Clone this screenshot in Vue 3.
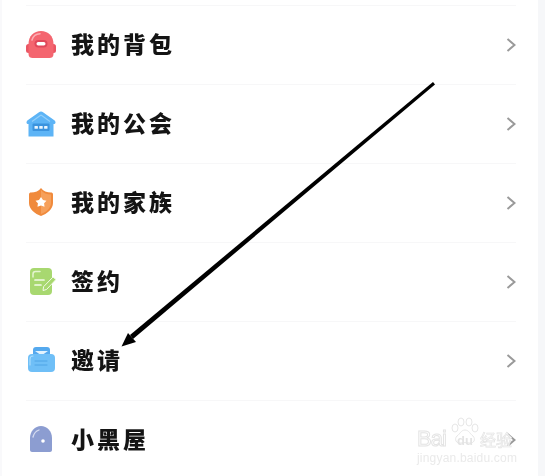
<template>
  <div class="page">
    <div class="list">
      <div v-for="item in items" :key="item.name" class="row">
        <svg class="icon" viewBox="0 0 30 30">
          <template v-if="item.icon === 'bag'">
            <rect x="0" y="14" width="5" height="9" rx="2.500" fill="#ea5563" />
            <rect x="25" y="14" width="5" height="9" rx="2.500" fill="#ea5563" />
            <path d="M2.500 14C2.500 6 8 1 15 1s12.500 5 12.500 13v10c0 3-2 4-4 4H6.500c-2 0-4-1-4-4z" fill="#f4656f" />
            <path d="M6 10C7 6.500 10 4 14 3.800" stroke="#fbaeb3" stroke-width="1.600" fill="none" stroke-linecap="round" />
            <rect x="8.500" y="10" width="13" height="7.500" rx="3.700" fill="#e0475a" />
            <rect x="10.500" y="12" width="9" height="3.500" rx="1.700" fill="#fff" />
          </template>
          <template v-else-if="item.icon === 'guild'">
            <path d="M15 2.500c.8 0 1.500.3 2 .7l11 7.800c1 .7 1.500 1.500 1.500 2.500 0 1-.8 1.500-2 1.500v12.500H2.500V15c-1.200 0-2-.5-2-1.500 0-1 .5-1.800 1.500-2.500l11-7.800c.5-.4 1.200-.7 2-.7z" fill="#5db4f6" />
            <path d="M15 6 6 12.500M15 6l9 6.500" stroke="#93cffa" stroke-width="1.100" fill="none" />
            <rect x="6.500" y="14.500" width="17" height="7.500" rx="1" fill="#3b93de" />
            <rect x="8.500" y="17" width="3.400" height="2.800" rx=".6" fill="#eaf6ff" />
            <rect x="13.300" y="17" width="3.400" height="2.800" rx=".6" fill="#eaf6ff" />
            <rect x="18.100" y="17" width="3.400" height="2.800" rx=".6" fill="#eaf6ff" />
          </template>
          <template v-else-if="item.icon === 'shield'">
            <path d="M15 0c2 3 6 4.500 10 4.500 1 0 2 .5 2 2V15c0 6-6 11-12 13C9 26 3 21 3 15V6.500c0-1.500 1-2 2-2C9 4.500 13 3 15 0z" fill="#f08a3c" />
            <path d="M15 2c2 3 6 4.500 10 4.500V15c0 5-5 9.500-10 11z" fill="#f6a05b" />
            <path d="m15 9 2 3 3.500.7-2.400 2.600.4 3.400-3.500-1.300-3.500 1.300.4-3.400-2.400-2.600 3.500-.7z" fill="#fff" />
          </template>
          <template v-else-if="item.icon === 'sign'">
            <rect x="4" y="1" width="22" height="27" rx="4" fill="#a8d870" />
            <path d="M7 10V7c0-1.500 1-2.500 2.500-2.500H14" stroke="#e4f4cf" stroke-width="1.500" fill="none" stroke-linecap="round" />
            <path d="M9 13h9M9 18h6" stroke="#f2fae7" stroke-width="1.700" stroke-linecap="round" />
            <path d="m27 10 3 2.500-9.500 10-3.500 1 .6-3.800z" fill="#a8d870" stroke="#f3fae9" stroke-width="1" />
          </template>
          <template v-else-if="item.icon === 'invite'">
            <path d="M7 9V4c0-2 1-3 3-3h11c2 0 3 1 3 3v5z" fill="#55a9ee" />
            <path d="M9 5h13l-6.500 4.500z" fill="#e3f3fe" />
            <rect x="2" y="8" width="27" height="18" rx="4" fill="#6fbff7" />
            <path d="M4 19v-6c0-1.500 1-3 3-3" stroke="#a9dcfc" stroke-width="1.200" fill="none" stroke-linecap="round" />
            <path d="M9 15h12M9 19h12" stroke="#4fa4e6" stroke-width="1" stroke-linecap="round" />
          </template>
          <template v-else>
            <path d="M4 13C4 6 9 1 15 1s11 5 11 12v12c0 1-1 2-2 2H6c-1 0-2-1-2-2z" fill="#8c9dd1" />
            <path d="M7 12c1-4 3-6 6-7" stroke="#d6dcf0" stroke-width="1.300" fill="none" stroke-linecap="round" />
            <circle cx="17" cy="16" r="1.800" fill="#fff" />
          </template>
        </svg>
        <span class="name">{{ item.name }}</span>
        <svg class="chevron" viewBox="0 0 10 16">
          <path d="M1.500 2 8.500 8l-7 6" />
        </svg>
      </div>
    </div>
    <svg class="arrow" viewBox="0 0 545 476">
      <path d="M433 82 435 84.500 133 339 130 335z" fill="#000" />
      <path d="M121.500 346.500 128 333 136 342z" fill="#000" />
    </svg>
    <div class="mark">
      <svg class="paw" viewBox="0 0 30 30">
        <path d="M15 13c-4 0-5 4-8 6-3 3-1 8 4 7 3-.5 5-.5 8 0 5 1 7-4 4-7-3-2-4-6-8-6z" />
        <ellipse cx="5" cy="11" rx="3" ry="4" />
        <ellipse cx="11" cy="5" rx="3" ry="4" />
        <ellipse cx="19" cy="5" rx="3" ry="4" />
        <ellipse cx="25" cy="11" rx="3" ry="4" />
      </svg>
      <div class="mark-top">
        <span class="bai">Bai</span>
        <span class="du">du</span>
        <span class="jy">经验</span>
      </div>
      <div class="mark-url">jingyan.baidu.com</div>
    </div>
  </div>
</template>

<script setup>
const items = [
  { name: '我的背包', icon: 'bag' },
  { name: '我的公会', icon: 'guild' },
  { name: '我的家族', icon: 'shield' },
  { name: '签约', icon: 'sign' },
  { name: '邀请', icon: 'invite' },
  { name: '小黑屋', icon: 'house' }
]
</script>

<style scoped>
.page {
  position: relative;
  width: 545px;
  height: 476px;
  overflow: hidden;
  background: #fff;
  font-family: "Noto Sans CJK SC", "Liberation Sans", sans-serif;
}

.list {
  height: 100%;
  box-sizing: border-box;
  padding: 5px 22px 0 24px;
  border-left: 2px solid #f9f9fb;
  border-right: 7px solid #f6f7f9;
}

.row {
  display: flex;
  align-items: center;
  height: 79px;
  box-sizing: border-box;
  border-top: 1px solid #f7f7f8;
}

.icon {
  width: 30px;
  height: 30px;
  flex: none;
  filter: blur(0.5px);
}

.name {
  flex: 1;
  margin: 0 0 5px 15px;
  font-size: 23px;
  font-weight: 900;
  letter-spacing: 3px;
  color: #141414;
  filter: blur(0.4px);
}

.chevron {
  width: 10px;
  height: 16px;
  flex: none;
  fill: none;
  stroke: #9a9a9a;
  stroke-width: 2;
  filter: blur(0.3px);
}

.arrow {
  position: absolute;
  top: 0;
  left: 0;
  width: 545px;
  height: 476px;
  filter: blur(0.3px);
}

.mark {
  position: absolute;
  left: 417px;
  top: 417px;
  width: 100px;
  height: 59px;
  color: #e6e6e6;
  filter: blur(0.3px);
}

.paw {
  position: absolute;
  left: 33px;
  top: 0;
  width: 30px;
  height: 30px;
  fill: #fff;
  stroke: #e6e6e6;
  stroke-width: 1;
}

.mark-top {
  position: relative;
  display: flex;
  align-items: flex-end;
  height: 32px;
  font-family: "Liberation Sans", sans-serif;
}

.bai {
  width: 30px;
  font-size: 22px;
  line-height: 21px;
  letter-spacing: -1px;
  color: #fff;
  -webkit-text-stroke: 1px #e4e4e4;
}

.du {
  width: 16px;
  margin-left: 10px;
  font-size: 13px;
  font-weight: 700;
  line-height: 17px;
  color: #e4e4e4;
}

.jy {
  margin-left: 7px;
  font-family: "Noto Sans CJK SC", sans-serif;
  font-size: 16px;
  line-height: 20px;
  color: #fff;
  -webkit-text-stroke: 0.7px #e4e4e4;
}

.mark-url {
  margin-top: 2px;
  font-family: "Liberation Sans", sans-serif;
  font-size: 12px;
  line-height: 14px;
  letter-spacing: 0.2px;
  color: #eaeaea;
}
</style>
